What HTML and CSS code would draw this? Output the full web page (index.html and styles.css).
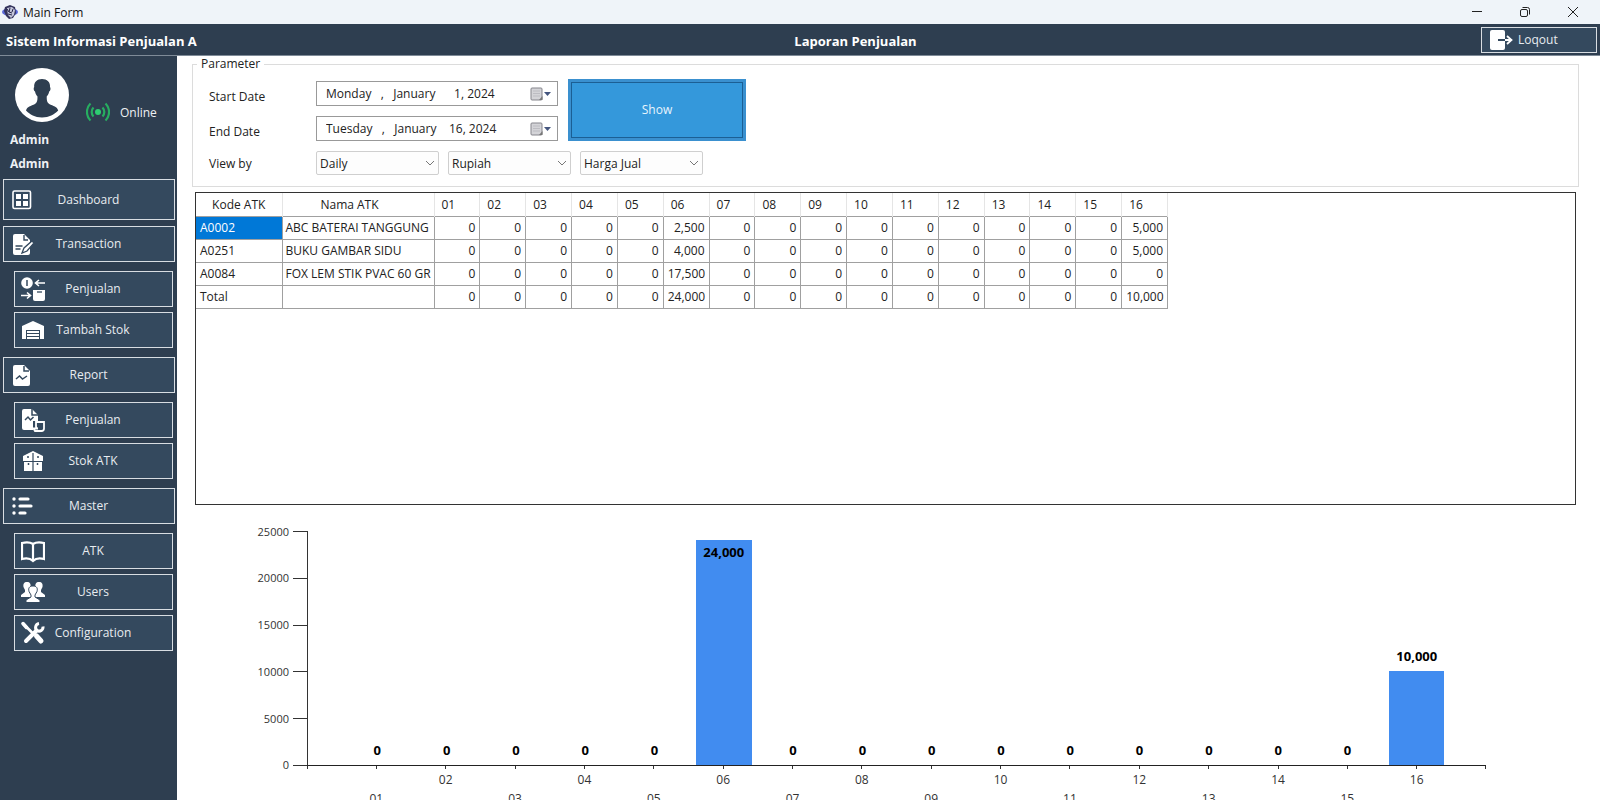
FILE: index.html
```
<!DOCTYPE html>
<html lang="id">
<head>
<meta charset="utf-8">
<title>Main Form</title>
<link rel="stylesheet" href="styles.css">
</head>
<body>
<div class="window">
  <div class="titlebar">
    <svg class="app-icon" viewBox="0 0 16 14"><ellipse cx="8" cy="7" rx="8" ry="4" fill="#5a68d8"/><path d="M3 2l5-2 5 2 1 6-3 5-4 1-3-3-2-5z" fill="#34345c"/><path d="M5 3l5-1 3 3-1 5-3 3-3-3z" fill="#c4c6da"/><path d="M5 4l2 3M8 3l-1 4 3 1M11 4l-1 3M6 9l4 1" stroke="#26264a" fill="none"/></svg>
    <span class="app-name">Main Form</span>
    <button class="win-btn" aria-label="Minimize"><svg viewBox="0 0 12 12"><path d="M1 5.500h10"/></svg></button>
    <button class="win-btn" aria-label="Restore"><svg viewBox="0 0 12 12"><rect x="1.500" y="3.500" width="7" height="7" rx="1.500"/><path d="M3.500 1.500H8.500a2 2 0 0 1 2 2v5"/></svg></button>
    <button class="win-btn" aria-label="Close"><svg viewBox="0 0 12 12"><path d="M1 1l10 10M11 1L1 11"/></svg></button>
  </div>

  <header class="header">
    <h1 class="brand">Sistem Informasi Penjualan A</h1>
    <h2 class="page-title">Laporan Penjualan</h2>
    <button class="logout"><svg viewBox="0 0 24 22"><rect x="1" y="1" width="15" height="20" rx="2" fill="#fff"/><path d="M9 11h7" stroke="#34495e" stroke-width="2"/><path d="M16 11h7M18 7l4.500 4L18 15" stroke="#fff" stroke-width="1.800" fill="none"/></svg><span>Loqout</span></button>
  </header>

  <div class="body">
    <aside class="sidebar">
      <div class="profile">
        <svg class="avatar" viewBox="0 0 54 54"><circle cx="27" cy="27" r="27" fill="#fff"/><path d="M27 11c5 0 8.500 3 8 8 1 1 .5 4-.8 4.500-.7 3-1.700 4-2.500 5 0 4 .3 6 2.500 7.500 4 2 8 2.500 9 6.500-4 4-9 7-16.200 7S15 46.500 11 42.500c1-4 5-4.500 9-6.500 2.200-1.500 2.500-3.500 2.500-7.500-.8-1-1.800-2-2.500-5-1.300-.5-1.800-3.500-.8-4.500-.5-5 3-8 7.800-8z" fill="#2e3e50"/></svg>
        <div class="status"><svg viewBox="0 0 24 20" fill="none" stroke="#27ae60" stroke-width="2.200"><circle cx="12" cy="10" r="3" fill="#2ecc71" stroke="none"/><path d="M7.500 5.500a6.500 6.500 0 0 0 0 9M16.500 5.500a6.500 6.500 0 0 1 0 9M4.500 1.500a12 12 0 0 0 0 17M19.500 1.500a12 12 0 0 1 0 17"/></svg><span>Online</span></div>
      </div>
      <p class="user">Admin</p>
      <p class="user role">Admin</p>

      <nav class="nav">
        <button class="item tall"><svg viewBox="0 0 24 24"><rect x="3" y="3" width="17.500" height="17.500" rx="1.500" fill="none" stroke="#fff" stroke-width="1.600"/><path d="M6 6h5v5H6zM13 6h5v5h-5zM6 13h5v5H6zM13 13h5v5h-5z"/></svg><span>Dashboard</span></button>

        <div class="group">
          <button class="item"><svg viewBox="0 0 24 24"><path d="M5 2h9l6 6v13a2 2 0 0 1-2 2H5a2 2 0 0 1-2-2V4a2 2 0 0 1 2-2z"/><path d="M14 3v5h4M5.500 14h7M5.500 17h5" fill="none" stroke="#34495e" stroke-width="1.400"/><path d="M12 21l2-5 8-7 2 2-7 8z" stroke="#34495e" stroke-width="1.300"/></svg><span>Transaction</span></button>
          <button class="item sub"><svg viewBox="0 0 24 24"><circle cx="6" cy="6" r="5.800"/><path d="M6 3v6" stroke="#34495e" stroke-width="1.500"/><path d="M24 6h-9M18 3l-3.500 3 3.500 3M0 18.500h9M6 15.500l3.500 3-3.500 3" fill="none" stroke="#fff" stroke-width="1.600"/><path d="M12 13h12v9a2 2 0 0 1-2 2h-8a2 2 0 0 1-2-2z"/><path d="M16 15h5" stroke="#34495e" stroke-width="1.300"/></svg><span>Penjualan</span></button>
          <button class="item sub"><svg viewBox="0 0 24 24"><path d="M1 8l11-5 11 5v13h-4v-9H5v9H1z"/><path d="M6 14h12M6 17h12M6 20h12" stroke="#fff" stroke-width="1.800"/></svg><span>Tambah Stok</span></button>
        </div>

        <div class="group">
          <button class="item"><svg viewBox="0 0 24 24"><path d="M5 2h9l6 6v13a2 2 0 0 1-2 2H5a2 2 0 0 1-2-2V4a2 2 0 0 1 2-2z"/><path d="M14 3v5h5M6 16l3.500-3 3 3 4.500-3" fill="none" stroke="#34495e" stroke-width="1.500"/></svg><span>Report</span></button>
          <button class="item sub"><svg viewBox="0 0 24 24"><path d="M3 1h8l6 6v6h-5v9H3a2 2 0 0 1-2-2V3a2 2 0 0 1 2-2z"/><path d="M11 1v6h6M4 12l3-3 2.500 3 3-3" fill="none" stroke="#34495e" stroke-width="1.500"/><path d="M15 14h8v6.500a2.500 2.500 0 0 1-2.500 2.500H14l-1.500-2.500H17a2 2 0 0 1-2-2z" fill="#34495e" stroke="#fff" stroke-width="1.800"/></svg><span>Penjualan</span></button>
          <button class="item sub"><svg viewBox="0 0 24 24"><path d="M2 7l10-5 10 5v5H2zM3 13h18v9H3z"/><path d="M12 4v18M2 12.500h20" stroke="#34495e" stroke-width="1.200"/><path d="M6 8h2M16 8h2M7.500 14v2M16.500 14v2" stroke="#34495e" stroke-width="1.500"/></svg><span>Stok ATK</span></button>
        </div>

        <div class="group">
          <button class="item"><svg viewBox="0 0 24 24"><circle cx="4" cy="5" r="1.700"/><circle cx="4" cy="12" r="1.700"/><circle cx="4" cy="19" r="1.700"/><path d="M10 5h8M10 12h11M10 19h5" stroke="#fff" stroke-width="3.200" stroke-linecap="round"/></svg><span>Master</span></button>
          <button class="item sub"><svg viewBox="0 0 24 24"><path d="M12 5C9 3 5 3 1 4v16c4-1 8-1 11 2 3-3 7-3 11-2V4c-4-1-8-1-11 1zv16" fill="none" stroke="#fff" stroke-width="2.200"/></svg><span>ATK</span></button>
          <button class="item sub"><svg viewBox="0 0 24 24"><path d="M6 2c3 0 4 2 3.500 5L8 10v2l3 2v3H0v-2l4-3v-2L2.500 7C2 4 3 2 6 2z"/><path d="M18 2c-3 0-4 2-3.500 5L16 10v2l-3 2v3h11v-2l-4-3v-2l1.500-3C22 4 21 2 18 2z"/><path d="M12 6c3.500 0 5 2 4 5.500L14 15v2l5 3v2.500H5V20l5-3v-2l-2-3.500C7 8 8.500 6 12 6z" stroke="#34495e"/></svg><span>Users</span></button>
          <button class="item sub"><svg viewBox="0 0 24 24" fill="none"><path d="M5 20L15.500 9.500" stroke="#fff" stroke-width="4" stroke-linecap="round"/><path d="M22 5.500a4 4 0 0 1-6 4 4 4 0 0 1 2-7" fill="none" stroke="#fff" stroke-width="3"/><path d="M2.500 3L12 12.500" stroke="#fff" stroke-width="2.600" stroke-linecap="round"/><path d="M2 2.500l3.500 4" stroke="#fff" stroke-width="3.500" stroke-linecap="round"/><path d="M15.500 15l4.500 5" stroke="#fff" stroke-width="5" stroke-linecap="round"/></svg><span>Configuration</span></button>
        </div>
      </nav>
    </aside>

    <main class="main">
      <fieldset class="params">
        <legend>Parameter</legend>
        <label for="start">Start Date</label>
        <div class="date"><input id="start" type="text" value="Monday   ,   January      1, 2024"><button aria-label="Pick start date"><svg viewBox="0 0 22 14"><rect x="1" y="1" width="11" height="12" rx="1" fill="#d4d4d8" stroke="#85858c"/><path d="M3 4h7M3 6.500h7M3 9h7" stroke="#bcbcc2"/><path d="M9 13l3.500-4v4z" fill="#777"/><path d="M14 5h7l-3.500 4z" fill="#44557e"/></svg></button></div>
        <button class="show">Show</button>
        <label for="end">End Date</label>
        <div class="date"><input id="end" type="text" value="Tuesday   ,   January    16, 2024"><button aria-label="Pick end date"><svg viewBox="0 0 22 14"><rect x="1" y="1" width="11" height="12" rx="1" fill="#d4d4d8" stroke="#85858c"/><path d="M3 4h7M3 6.500h7M3 9h7" stroke="#bcbcc2"/><path d="M9 13l3.500-4v4z" fill="#777"/><path d="M14 5h7l-3.500 4z" fill="#44557e"/></svg></button></div>
        <label for="view">View by</label>
        <div class="selects">
          <div class="select"><select id="view"><option>Daily</option></select><svg viewBox="0 0 10 6"><path d="M1 1l4 4 4-4"/></svg></div>
          <div class="select"><select aria-label="Unit"><option>Rupiah</option></select><svg viewBox="0 0 10 6"><path d="M1 1l4 4 4-4"/></svg></div>
          <div class="select"><select aria-label="Price"><option>Harga Jual</option></select><svg viewBox="0 0 10 6"><path d="M1 1l4 4 4-4"/></svg></div>
        </div>
      </fieldset>

      <div class="grid-frame">
        <table class="grid">
          <colgroup><col class="c-code"><col class="c-name"><col span="16"></colgroup>
          <thead><tr><th class="mid">Kode ATK</th><th class="mid sortable">Nama ATK</th><th>01</th><th>02</th><th>03</th><th>04</th><th>05</th><th>06</th><th>07</th><th>08</th><th>09</th><th>10</th><th>11</th><th>12</th><th>13</th><th>14</th><th>15</th><th>16</th></tr></thead>
          <tbody>
            <tr><td class="text selected">A0002</td><td class="text">ABC BATERAI TANGGUNG</td><td>0</td><td>0</td><td>0</td><td>0</td><td>0</td><td>2,500</td><td>0</td><td>0</td><td>0</td><td>0</td><td>0</td><td>0</td><td>0</td><td>0</td><td>0</td><td>5,000</td></tr>
            <tr><td class="text">A0251</td><td class="text">BUKU GAMBAR SIDU</td><td>0</td><td>0</td><td>0</td><td>0</td><td>0</td><td>4,000</td><td>0</td><td>0</td><td>0</td><td>0</td><td>0</td><td>0</td><td>0</td><td>0</td><td>0</td><td>5,000</td></tr>
            <tr><td class="text">A0084</td><td class="text">FOX LEM STIK PVAC 60 GR</td><td>0</td><td>0</td><td>0</td><td>0</td><td>0</td><td>17,500</td><td>0</td><td>0</td><td>0</td><td>0</td><td>0</td><td>0</td><td>0</td><td>0</td><td>0</td><td>0</td></tr>
            <tr><td class="text">Total</td><td class="text"></td><td>0</td><td>0</td><td>0</td><td>0</td><td>0</td><td>24,000</td><td>0</td><td>0</td><td>0</td><td>0</td><td>0</td><td>0</td><td>0</td><td>0</td><td>0</td><td>10,000</td></tr>
          </tbody>
        </table>
      </div>

      <section class="chart">
        <div class="y-axis"><span>25000</span><span>20000</span><span>15000</span><span>10000</span><span>5000</span><span>0</span></div>
        <div class="plot">
          <div class="col"><b>0</b></div><div class="col"><b>0</b></div><div class="col"><b>0</b></div><div class="col"><b>0</b></div><div class="col"><b>0</b></div>
          <div class="col"><div class="bar" style="height:96%"><b>24,000</b></div></div>
          <div class="col"><b>0</b></div><div class="col"><b>0</b></div><div class="col"><b>0</b></div><div class="col"><b>0</b></div><div class="col"><b>0</b></div><div class="col"><b>0</b></div><div class="col"><b>0</b></div><div class="col"><b>0</b></div><div class="col"><b>0</b></div>
          <div class="col"><b>10,000</b><div class="bar" style="height:40%"></div></div>
        </div>
        <div class="x-axis"><span>01</span><span>02</span><span>03</span><span>04</span><span>05</span><span>06</span><span>07</span><span>08</span><span>09</span><span>10</span><span>11</span><span>12</span><span>13</span><span>14</span><span>15</span><span>16</span></div>
      </section>
    </main>
  </div>
</div>
</body>
</html>
```
FILE: styles.css
```
* { box-sizing: border-box; }
body { margin: 0; font: 12px/16px "Open Sans", "Noto Sans", sans-serif; color: #222; background: #fff; }
button, input, select { font: inherit; color: inherit; margin: 0; padding: 0; }
.window { height: 100vh; display: flex; flex-direction: column; overflow: hidden; }

.titlebar { flex: none; height: 24px; display: flex; align-items: center; background: #eff4f9; color: #111; }
.app-icon { width: 16px; height: 14px; margin: 0 5px 0 2px; }
.app-name { flex: 1; padding-top: 1px; }
.win-btn { width: 48px; height: 24px; border: 0; background: none; display: flex; align-items: center; justify-content: center; }
.win-btn:last-child { margin-right: 3px; }
.win-btn svg { width: 12px; height: 12px; fill: none; stroke: #222; stroke-width: 1; }

.header { flex: none; height: 32px; padding: 0 3px 0 6px; display: grid; grid-template-columns: 224px 1fr 116px; align-items: center; background: #2e3e50; color: #fff; border-bottom: 1px solid #7f8b98; }
.brand, .page-title { margin: 0; padding-top: 2px; font-size: 13px; font-weight: 700; line-height: 18px; white-space: nowrap; }
.page-title { text-align: center; }
.logout { height: 26px; padding: 0 7px; display: flex; align-items: center; gap: 5px; background: #34495e; border: 1px solid #d8dde2; color: #e8ecf0; }
.logout svg { width: 24px; height: 22px; }
.logout span { padding-top: 1px; }

.body { flex: 1; min-height: 0; display: flex; }
.sidebar { flex: none; width: 177px; background: #2e3e50; color: #eef1f4; }
.profile { display: flex; align-items: flex-end; gap: 17px; padding: 12px 0 0 15px; }
.avatar { width: 54px; height: 54px; }
.status { display: flex; align-items: center; gap: 10px; height: 20px; }
.status svg { width: 24px; height: 20px; }
.status span { padding-top: 2px; }
.user { margin: 0; padding: 10px 0 0 10px; font-weight: 700; }
.role { padding-top: 8px; }
.nav { padding: 7px 2px 0 3px; }
.item { width: 100%; height: 36px; display: flex; align-items: center; padding: 0 4px; background: #34495e; border: 1px solid #d8dde2; color: #e8ecf0; }
.item.tall { height: 41px; margin-bottom: 6px; }
.item svg { flex: none; width: 24px; height: 24px; margin-left: 2px; fill: #fff; }
.item span { flex: 1; padding-right: 27px; text-align: center; }
.group { display: flex; flex-direction: column; gap: 5px; margin-bottom: 9px; }
.group .item:first-child { margin-bottom: 4px; }
.item.sub { width: auto; margin: 0 2px 0 11px; }

.main { flex: 1; min-width: 0; padding: 0 21px 0 15px; }
.params { margin: 0; padding: 9px 0 11px 16px; border: 1px solid #dcdcdc; display: grid; grid-template-columns: 107px 242px 188px; row-gap: 10px; align-items: center; }
.params legend { padding: 0 4px; margin-left: -12px; }
.params label { padding-top: 6px; }
.params label[for=view] { padding-top: 1px; }
.date { display: flex; align-items: center; height: 25px; border: 1px solid #999; background: #fff; }
.date input { flex: 1; min-width: 0; border: 0; outline: 0; padding-left: 9px; background: none; }
.date button { width: 22px; height: 14px; margin-right: 5px; border: 0; background: none; display: flex; }
.show { grid-row: 1 / 3; grid-column: 3; align-self: stretch; margin: -2px 0 0 10px; width: 178px; background: #3498db; border: 3px solid #3a90cf; outline: 1px solid #1b5f94; outline-offset: -4px; color: #e8f4fd; }
.selects { grid-column: 2 / 4; display: flex; gap: 9px; }
.select { position: relative; width: 123px; }
.select select { display: block; width: 100%; height: 24px; padding: 1px 3px 0; appearance: none; border: 1px solid #cfcfcf; border-radius: 2px; background: #fdfdfd; }
.select svg { position: absolute; right: 4px; top: 9px; width: 10px; height: 6px; fill: none; stroke: #777; pointer-events: none; }

.grid-frame { margin: 5px 3px 0; height: 313px; border: 1px solid #333; }
.grid { width: 972px; table-layout: fixed; border-collapse: collapse; }
.c-code { width: 86px; }
.c-name { width: 152px; }
.grid th { height: 23px; padding: 2px 7px 0; font-weight: 400; text-align: left; border-right: 1px solid #e5e5e5; }
.grid th.mid { text-align: center; }
.grid th.sortable { padding-right: 24px; }
.grid td { height: 23px; padding: 0 4px; text-align: right; border: 1px solid #a0a0a0; white-space: nowrap; }
.grid td:first-child { border-left: 0; }
.grid td.text { text-align: left; padding: 0 3px; }
.grid td.text:first-child { padding-left: 4px; }
.grid td.selected { background: #0078d7; color: #fff; }

.chart { display: grid; grid-template-columns: 115px 1fr; padding: 26px 93px 0 0; color: #333; }
.y-axis { height: 235px; display: flex; flex-direction: column; justify-content: space-between; font-size: 11px; }
.y-axis span { height: 1px; display: flex; align-items: center; justify-content: flex-end; gap: 4px; }
.y-axis span::after { content: ""; width: 14px; height: 1px; background: #333; }
.plot { height: 235px; display: flex; padding: 0 2.94%; border-left: 1px solid #333; border-bottom: 1px solid #222; }
.col { flex: 1; display: flex; flex-direction: column; justify-content: flex-end; align-items: center; }
.col b { padding-bottom: 7px; color: #000; font-size: 13px; }
.bar { width: 80%; background: #418cf0; text-align: center; }
.bar b { display: block; padding-top: 4px; }
.x-axis { grid-column: 2; position: relative; display: flex; padding: 0 2.94%; }
.x-axis span { flex: 1; display: flex; flex-direction: column; align-items: center; }
.x-axis span::before { content: ""; width: 1px; height: 3px; margin-bottom: 3px; background: #333; }
.x-axis span:nth-child(odd)::before { margin-bottom: 22px; }
.x-axis::before, .x-axis::after { content: ""; position: absolute; top: 0; width: 1px; height: 3px; background: #333; }
.x-axis::before { left: 0; }
.x-axis::after { right: 0; }
```
